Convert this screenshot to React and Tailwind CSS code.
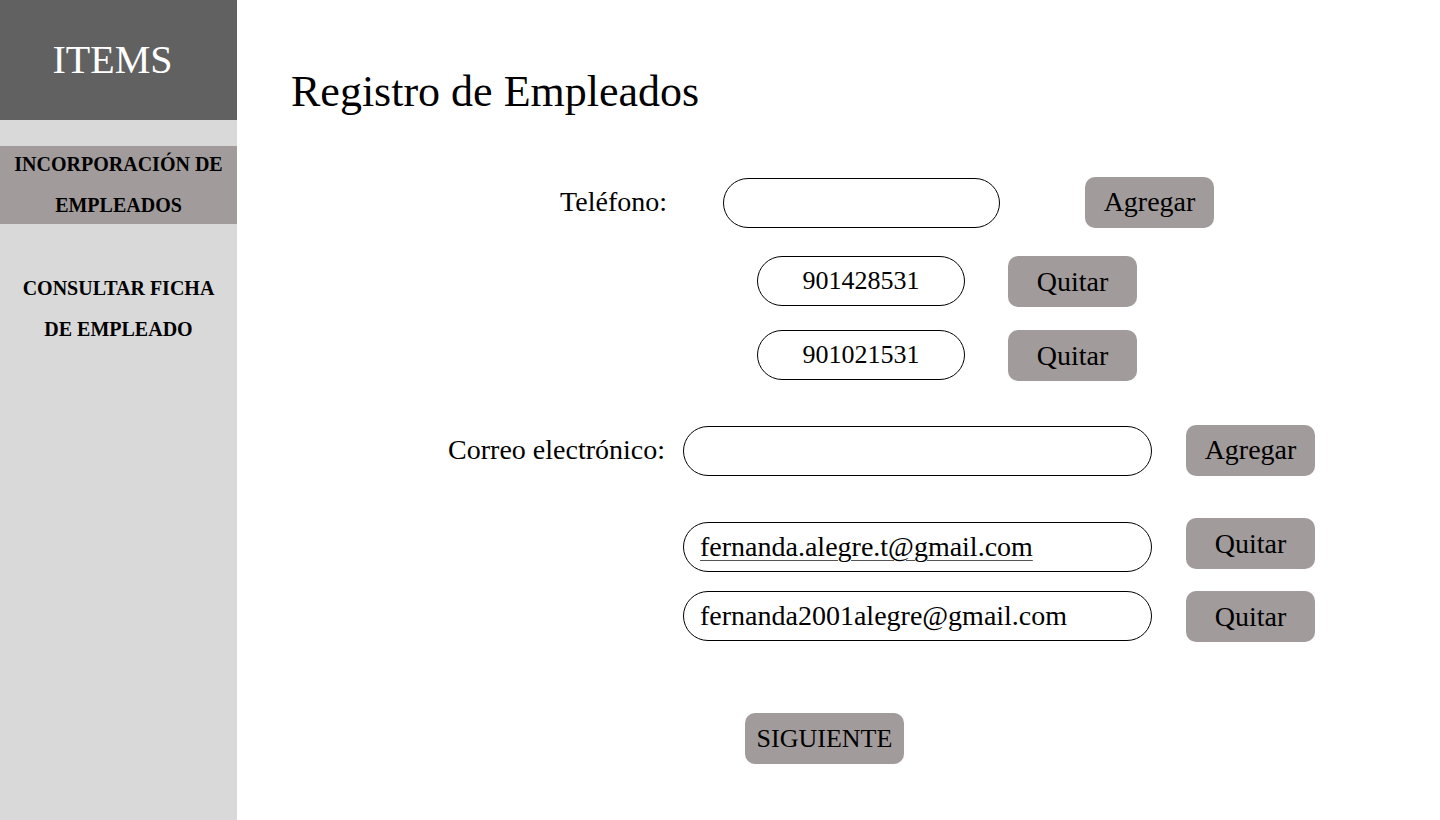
const buttonStyle =
  'h-[51px] w-[129px] shrink-0 rounded-[10px] bg-[#a29b9b] text-center text-[28px] leading-8 text-black';
const pillStyle = 'h-[50px] min-w-0 flex-1 rounded-full border border-black bg-white leading-8 text-black';

const phones = ['901428531', '901021531'];

function Sidebar() {
  return (
    <aside className="w-[237px] shrink-0 bg-[#d9d9d9]">
      <div className="flex h-[120px] items-center justify-center bg-[#616161] pr-3">
        <h2 className="text-[40px] leading-[48px] text-white">ITEMS</h2>
      </div>
      <nav className="mt-[26px] flex flex-col gap-[46px] text-center text-[20px] leading-[41px] font-bold text-black">
        <a href="#incorporacion" aria-current="page" className="flex h-[78px] items-center justify-center bg-[#a29b9b]">
          <span>
            INCORPORACIÓN DE
            <br />
            EMPLEADOS
          </span>
        </a>
        <a href="#consultar" className="flex h-[78px] items-center justify-center">
          <span>
            CONSULTAR FICHA
            <br />
            DE EMPLEADO
          </span>
        </a>
      </nav>
    </aside>
  );
}

export default function App() {
  return (
    <div className="flex min-h-screen bg-white font-['Liberation_Serif',serif] text-black">
      <Sidebar />
      <main className="min-w-0 flex-1 pb-14 pl-[54px]">
        <h1 className="mt-16 text-[44px] leading-[56px]">Registro de Empleados</h1>

        <form onSubmit={(event) => event.preventDefault()}>
          <section className="mt-14">
            <div className="flex items-center">
              <label htmlFor="telefono" className="w-[376px] shrink-0 text-right text-[28px] leading-8">
                Teléfono:
              </label>
              <input id="telefono" type="tel" className={`${pillStyle} mt-[2px] ml-14 max-w-[277px] px-4 text-[28px]`} />
              <button type="button" className={`${buttonStyle} ml-[85px]`}>
                Agregar
              </button>
            </div>
            <ul className="mt-7 flex flex-col gap-[23px] pl-[466px]">
              {phones.map((phone) => (
                <li key={phone} className="flex items-start">
                  <input
                    readOnly
                    aria-label={`Teléfono ${phone}`}
                    value={phone}
                    className={`${pillStyle} max-w-[208px] px-4 text-center text-[26px]`}
                  />
                  <button type="button" className={`${buttonStyle} ml-[43px]`}>
                    Quitar
                  </button>
                </li>
              ))}
            </ul>
          </section>

          <section className="mt-[43px]">
            <div className="flex items-center">
              <label htmlFor="correo" className="w-[374px] shrink-0 text-right text-[28px] leading-8">
                Correo electrónico:
              </label>
              <input id="correo" type="email" className={`${pillStyle} mt-[2px] ml-[18px] max-w-[469px] px-4 text-[28px]`} />
              <button type="button" className={`${buttonStyle} ml-[34px]`}>
                Agregar
              </button>
            </div>
            <ul className="mt-[42px] flex flex-col gap-[19px] pl-[392px]">
              <li className="flex items-start">
                <div className={`${pillStyle} mt-1 flex max-w-[469px] items-center px-4 text-[28px]`}>
                  <a
                    href="mailto:fernanda.alegre.t@gmail.com"
                    className="underline decoration-[#555555] decoration-1 underline-offset-4"
                  >
                    fernanda.alegre.t@gmail.com
                  </a>
                </div>
                <button type="button" className={`${buttonStyle} ml-[34px]`}>
                  Quitar
                </button>
              </li>
              <li className="flex items-start">
                <input
                  readOnly
                  aria-label="Correo fernanda2001alegre@gmail.com"
                  value="fernanda2001alegre@gmail.com"
                  className={`${pillStyle} max-w-[469px] px-4 text-[28px]`}
                />
                <button type="button" className={`${buttonStyle} ml-[34px]`}>
                  Quitar
                </button>
              </li>
            </ul>
          </section>

          <button
            type="submit"
            className="mt-[71px] ml-[454px] h-[51px] w-[159px] rounded-[10px] bg-[#a29b9b] text-[26px] leading-8"
          >
            SIGUIENTE
          </button>
        </form>
      </main>
    </div>
  );
}
